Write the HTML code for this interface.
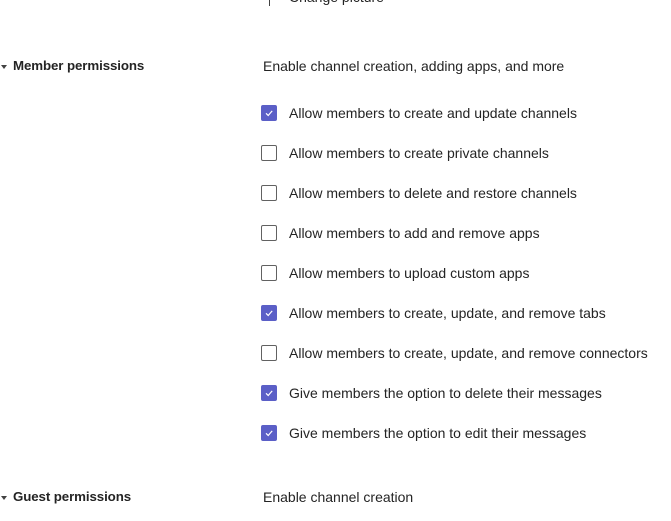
<html><head><style>
body{margin:0;width:671px;height:521px;overflow:hidden;background:#fff;font-family:"Liberation Sans",sans-serif;font-size:14px;color:#242424;position:relative}
.a{position:absolute;white-space:nowrap;line-height:20px}
.b{font-weight:bold;font-size:13.3px;letter-spacing:-0.1px}
.cb{position:absolute;left:261px;width:16px;height:16px;box-sizing:border-box;border:1px solid #616161;border-radius:2px;background:#fff}
.cb.on{background:#5b5fc7;border-color:#5b5fc7}
.cb svg{position:absolute;left:1px;top:1px}
.tri{position:absolute;left:1px;width:0;height:0;border-left:3px solid transparent;border-right:3px solid transparent;border-top:4px solid #424242}
</style></head><body>
<div style="position:absolute;left:269px;top:0;width:1px;height:6px;background:#424242"></div>
<div class="a" style="left:289px;top:-13px">Change picture</div>
<div class="tri" style="top:65px"></div>
<div class="a b" style="left:13px;top:56px">Member permissions</div>
<div class="a" style="left:263px;top:56px">Enable channel creation, adding apps, and more</div>

<div class="cb on" style="top:105px"><svg width="12" height="12" viewBox="0 0 12 12"><path d="M3 6.3l2.2 2.2 4-4.6" fill="none" stroke="#fff" stroke-width="1.2"/></svg></div>
<div class="a" style="left:289px;top:103px">Allow members to create and update channels</div>
<div class="cb" style="top:145px"></div>
<div class="a" style="left:289px;top:143px">Allow members to create private channels</div>
<div class="cb" style="top:185px"></div>
<div class="a" style="left:289px;top:183px">Allow members to delete and restore channels</div>
<div class="cb" style="top:225px"></div>
<div class="a" style="left:289px;top:223px">Allow members to add and remove apps</div>
<div class="cb" style="top:265px"></div>
<div class="a" style="left:289px;top:263px">Allow members to upload custom apps</div>
<div class="cb on" style="top:305px"><svg width="12" height="12" viewBox="0 0 12 12"><path d="M3 6.3l2.2 2.2 4-4.6" fill="none" stroke="#fff" stroke-width="1.2"/></svg></div>
<div class="a" style="left:289px;top:303px">Allow members to create, update, and remove tabs</div>
<div class="cb" style="top:345px"></div>
<div class="a" style="left:289px;top:343px">Allow members to create, update, and remove connectors</div>
<div class="cb on" style="top:385px"><svg width="12" height="12" viewBox="0 0 12 12"><path d="M3 6.3l2.2 2.2 4-4.6" fill="none" stroke="#fff" stroke-width="1.2"/></svg></div>
<div class="a" style="left:289px;top:383px">Give members the option to delete their messages</div>
<div class="cb on" style="top:425px"><svg width="12" height="12" viewBox="0 0 12 12"><path d="M3 6.3l2.2 2.2 4-4.6" fill="none" stroke="#fff" stroke-width="1.2"/></svg></div>
<div class="a" style="left:289px;top:423px">Give members the option to edit their messages</div>

<div class="tri" style="top:496px"></div>
<div class="a b" style="left:13px;top:487px">Guest permissions</div>
<div class="a" style="left:263px;top:487px">Enable channel creation</div>
</body></html>
